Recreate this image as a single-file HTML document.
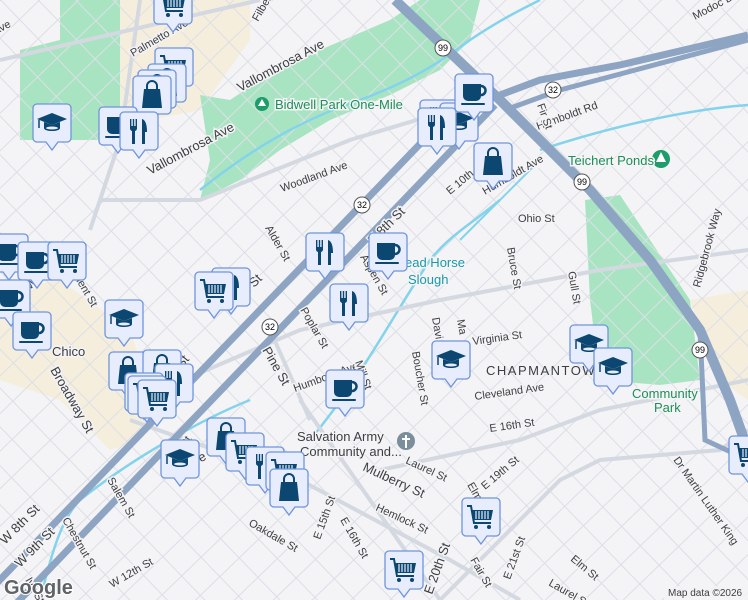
<!DOCTYPE html>
<html><head><meta charset="utf-8"><style>
html,body{margin:0;padding:0;width:748px;height:600px;overflow:hidden;background:#f4f3f5}
svg{display:block}
text{font-family:"Liberation Sans",sans-serif}
.s{font-size:11px;fill:#3c4043;paint-order:stroke;stroke:#f4f3f5;stroke-width:3px}
.m{font-size:13px;fill:#3c4043;paint-order:stroke;stroke:#f4f3f5;stroke-width:3px}
.g{font-size:13px;fill:#1e8e5a;paint-order:stroke;stroke:#f4f3f5;stroke-width:3px}
.w{font-size:13px;fill:#1a9aa8;paint-order:stroke;stroke:#f4f3f5;stroke-width:3px}
</style></head><body>
<svg width="748" height="600" viewBox="0 0 748 600" xmlns="http://www.w3.org/2000/svg">
<defs>
<pattern id="grid" width="27" height="27" patternUnits="userSpaceOnUse" patternTransform="rotate(-44)">
<line x1="0" y1="0" x2="27" y2="0" stroke="#dcdfe7" stroke-width="2"/>
<line x1="0" y1="0" x2="0" y2="27" stroke="#dcdfe7" stroke-width="2"/>
</pattern>
<g id="box"><path d="M4 0H34A4 4 0 0 1 38 4V34A4 4 0 0 1 34 38H25L19 46L13 38H4A4 4 0 0 1 0 34V4A4 4 0 0 1 4 0Z" fill="#e7edfc" stroke="#6f95dc" stroke-width="1.3"/></g>
<g id="cup"><use href="#box"/><path d="M8 10H26V22A5 5 0 0 1 21 27H13A5 5 0 0 1 8 22Z" fill="#0b4770"/><path d="M26 12A4 4 0 0 1 26 21" stroke="#0b4770" stroke-width="2.5" fill="none"/><rect x="6" y="29" width="24" height="2" rx="1" fill="#0b4770"/></g>
<g id="fork"><use href="#box"/><path d="M10 7V16A3 3 0 0 0 12 19V32H15V19A3 3 0 0 0 17 16V7H15.6V14H14.2V7H12.8V14H11.4V7Z" fill="#0b4770"/><path d="M22 32V7C26 8 27 14 27 20H25V32Z" fill="#0b4770"/></g>
<g id="bag"><use href="#box"/><path d="M14 13V10A5 5 0 0 1 24 10V13" stroke="#0b4770" stroke-width="2" fill="none"/><path d="M11 13H27L29 32H9Z" fill="#0b4770"/></g>
<g id="cart"><use href="#box"/><path d="M5 8H9L12 25H29" stroke="#0b4770" stroke-width="2" fill="none"/><path d="M10 12H31L29 22H12Z" fill="#0b4770"/><path d="M14 13V21M17 13V21M20 13V21M23 13V21M26 13V21" stroke="#e7edfc" stroke-width="1.2"/><circle cx="14" cy="29" r="2" fill="#0b4770"/><circle cx="27" cy="29" r="2" fill="#0b4770"/></g>
<g id="grad"><use href="#box"/><path d="M4 15L19 9L34 15L19 21Z" fill="#0b4770"/><path d="M11 18V24C11 28 27 28 27 24V18L19 21Z" fill="#0b4770"/><path d="M6 16V24" stroke="#0b4770" stroke-width="1.5"/><ellipse cx="19" cy="24" rx="6" ry="1.5" fill="#e7edfc"/></g>
</defs>
<rect width="748" height="600" fill="#f4f3f5"/>
<path d="M100 0H250V40L200 110L150 120L120 130L110 80L100 60Z" fill="#f6eedc"/>
<path d="M0 290L60 280L130 330L150 390L140 440L110 450L60 400L0 380Z" fill="#f6eedc"/>
<path d="M690 300L748 290V400L720 380Z" fill="#f6eedc"/>
<path d="M60 0H120V140H20V50L60 40Z" fill="#a9e4c2"/>
<path d="M200 95L230 100L260 80L320 50L390 20L420 0H480L470 40L440 70L390 95L330 120L280 150L240 180L200 200L210 160Z" fill="#a9e4c2"/>
<path d="M585 200L620 195L650 240L690 300L700 380L660 385L600 380L590 300Z" fill="#a9e4c2"/>
<rect width="748" height="600" fill="url(#grid)"/>
<path d="M200 190C250 150 300 120 360 100C400 85 430 70 470 40C500 20 520 10 540 0" stroke="#84d3ec" stroke-width="2.5" fill="none"/>
<path d="M540 150C600 130 680 110 748 105" stroke="#84d3ec" stroke-width="2.5" fill="none"/>
<path d="M460 240C500 200 520 180 540 160" stroke="#84d3ec" stroke-width="2" fill="none"/>
<path d="M310 440C360 380 390 320 430 260C450 235 470 225 500 200" stroke="#84d3ec" stroke-width="2.5" fill="none"/>
<path d="M250 400C200 420 130 460 80 500C60 520 50 560 40 600" stroke="#84d3ec" stroke-width="2.5" fill="none"/>
<g stroke="#d3d8e1" stroke-width="4" fill="none">
<path d="M0 60L260 0"/><path d="M90 230L120 140L140 0"/><path d="M100 200L200 200L350 140L450 110"/>
<path d="M160 390L300 330L440 300L600 270L748 250"/><path d="M380 470L520 440L600 410L748 380"/>
<path d="M130 420L300 480L450 560L520 600"/><path d="M300 400L440 600"/><path d="M440 600L560 480L600 460L720 450L748 430"/>
<path d="M270 330L310 420"/>
</g>
<path d="M-5 585L445 118" stroke="#8da4c2" stroke-width="7" fill="none"/>
<path d="M10 610L495 105" stroke="#8da4c2" stroke-width="7" fill="none"/>
<path d="M395 0L500 100L590 190L650 260L700 330L730 400L748 450" stroke="#8da4c2" stroke-width="10" fill="none"/>
<path d="M748 35L620 65L540 80L500 95" stroke="#8da4c2" stroke-width="7" fill="none"/>
<path d="M748 40L560 90L505 110" stroke="#8da4c2" stroke-width="5" fill="none"/>
<path d="M700 330L705 440L748 460" stroke="#8da4c2" stroke-width="5" fill="none"/>
<g font-size="9" text-anchor="middle">
<circle cx="443" cy="48" r="8" fill="#fff" stroke="#555"/><text x="443" y="51">99</text>
<circle cx="553" cy="90" r="8" fill="#fff" stroke="#555"/><text x="553" y="93">32</text>
<circle cx="582" cy="182" r="8" fill="#fff" stroke="#555"/><text x="582" y="185">99</text>
<circle cx="362" cy="205" r="8" fill="#fff" stroke="#555"/><text x="362" y="208">32</text>
<circle cx="270" cy="327" r="8" fill="#fff" stroke="#555"/><text x="270" y="330">32</text>
<circle cx="700" cy="350" r="8" fill="#fff" stroke="#555"/><text x="700" y="353">99</text>
</g>
<text class="s" transform="translate(-5,35) rotate(-28)">Ave</text>
<text class="s" transform="translate(133,57) rotate(-30)">Palmetto Ave</text>
<text class="s" transform="translate(258,22) rotate(-60)">Filbert Ave</text>
<text class="m" transform="translate(240,92) rotate(-28)">Vallombrosa Ave</text>
<text class="m" transform="translate(150,175) rotate(-28)">Vallombrosa Ave</text>
<circle cx="262" cy="104" r="7" fill="#1e9c6a"/><path d="M262 99L258 106H266Z" fill="#fff"/>
<text class="g" x="275" y="109">Bidwell Park One-Mile</text>
<text class="s" transform="translate(282,192) rotate(-20)">Woodland Ave</text>
<text class="s" transform="translate(265,228) rotate(60)">Alder St</text>
<text class="s" transform="translate(360,257) rotate(60)">Aspen St</text>
<text class="m" transform="translate(230,312) rotate(-45)">E 8th St</text>
<text class="m" transform="translate(373,245) rotate(-45)">E 8th St</text>
<text class="s" transform="translate(450,195) rotate(-40)">E 10th</text>
<text class="s" transform="translate(485,195) rotate(-30)">Humboldt Ave</text>
<text class="s" transform="translate(538,130) rotate(-20)">Humboldt Rd</text>
<text class="s" transform="translate(537,105) rotate(70)">Fir St</text>
<text class="s" x="518" y="222">Ohio St</text>
<text class="s" transform="translate(507,248) rotate(80)">Bruce St</text>
<text class="s" transform="translate(568,272) rotate(80)">Gull St</text>
<text class="s" transform="translate(700,288) rotate(-75)">Ridgebrook Way</text>
<text class="s" transform="translate(695,20) rotate(-28)">Modoc Dr</text>
<circle cx="661" cy="159" r="9" fill="#1e9c6a"/><path d="M661 152L656 162H666Z" fill="#fff"/>
<text class="g" x="568" y="165">Teichert Ponds</text>
<text class="w" x="405" y="267">ead Horse</text>
<text class="w" x="408" y="284">Slough</text>
<text class="s" transform="translate(300,310) rotate(60)">Poplar St</text>
<text class="s" transform="translate(295,392) rotate(-20)">Humboldt Ave</text>
<text class="s" transform="translate(355,362) rotate(70)">Mill St</text>
<text class="m" transform="translate(262,350) rotate(60)">Pine St</text>
<text class="s" transform="translate(432,318) rotate(80)">Davi</text>
<text class="s" transform="translate(457,320) rotate(80)">Ma</text>
<text class="s" transform="translate(412,352) rotate(80)">Boucher St</text>
<text class="s" transform="translate(473,345) rotate(-8)">Virginia St</text>
<text x="486" y="375" font-size="13" fill="#3c4043" letter-spacing="1.5">CHAPMANTOWN</text>
<text class="s" transform="translate(475,400) rotate(-8)">Cleveland Ave</text>
<text class="g" x="632" y="398">Community</text>
<text class="g" x="654" y="412">Park</text>
<text class="s" transform="translate(490,432) rotate(-8)">E 16th St</text>
<circle cx="406" cy="441" r="9" fill="#7b8e9c"/><path d="M406 435V448M402 439H410" stroke="#fff" stroke-width="2"/>
<text class="m" x="297" y="441">Salvation Army</text>
<text class="m" x="300" y="456">Community and...</text>
<text class="s" transform="translate(405,463) rotate(25)">Laurel St</text>
<text class="s" transform="translate(485,490) rotate(-40)">E 19th St</text>
<text class="s" transform="translate(467,485) rotate(60)">Elm</text>
<text class="m" transform="translate(362,470) rotate(25)">Mulberry St</text>
<text class="s" transform="translate(375,510) rotate(25)">Hemlock St</text>
<text class="m" transform="translate(432,595) rotate(-70)">E 20th St</text>
<text class="s" transform="translate(470,560) rotate(60)">Fair St</text>
<text class="s" transform="translate(510,580) rotate(-70)">E 21st St</text>
<text class="s" transform="translate(570,560) rotate(40)">Elm St</text>
<text class="s" transform="translate(548,585) rotate(30)">Laurel St</text>
<text class="s" transform="translate(673,460) rotate(55)">Dr Martin Luther King</text>
<text class="s" transform="translate(340,520) rotate(60)">E 16th St</text>
<text class="s" transform="translate(320,540) rotate(-70)">E 15th St</text>
<text class="s" transform="translate(248,525) rotate(30)">Oakdale St</text>
<text class="s" transform="translate(112,588) rotate(-30)">W 12th St</text>
<text class="s" transform="translate(168,480) rotate(-60)">W 11th St</text>
<text class="s" transform="translate(107,480) rotate(60)">Salem St</text>
<text class="s" transform="translate(62,520) rotate(60)">Chestnut St</text>
<text class="s" transform="translate(25,580) rotate(60)">Ivy St</text>
<text class="m" transform="translate(20,568) rotate(-45)">W 9th St</text>
<text class="m" transform="translate(5,545) rotate(-45)">W 8th St</text>
<text class="m" transform="translate(50,370) rotate(60)">Broadway St</text>
<text class="m" x="52" y="356">Chico</text>
<text class="s" transform="translate(70,270) rotate(60)">Orient St</text>
<text class="s" transform="translate(30,290) rotate(-40)">Wall St</text>
<text class="s" transform="translate(30,330) rotate(-60)">E 5</text>
<text class="m" transform="translate(188,470) rotate(-30)">Ave</text>
<text class="m" transform="translate(160,395) rotate(-50)">E 9th St</text>
<use href="#cart" x="154" y="-14"/>
<use href="#cart" x="155" y="48"/>
<use href="#bag" x="148" y="64"/>
<use href="#bag" x="138" y="70"/>
<use href="#bag" x="133" y="76"/>
<use href="#grad" x="33" y="104"/>
<use href="#cup" x="99" y="107"/>
<use href="#fork" x="120" y="112"/>
<use href="#fork" x="420" y="100"/>
<use href="#grad" x="440" y="103"/>
<use href="#fork" x="418" y="108"/>
<use href="#cup" x="455" y="74"/>
<use href="#bag" x="474" y="143"/>
<use href="#fork" x="306" y="233"/>
<use href="#cup" x="369" y="233"/>
<use href="#fork" x="330" y="284"/>
<use href="#cup" x="-10" y="234"/>
<use href="#cup" x="18" y="242"/>
<use href="#cart" x="48" y="242"/>
<use href="#cup" x="-8" y="280"/>
<use href="#cup" x="13" y="312"/>
<use href="#fork" x="212" y="268"/>
<use href="#cart" x="195" y="272"/>
<use href="#grad" x="105" y="300"/>
<use href="#bag" x="109" y="352"/>
<use href="#bag" x="143" y="350"/>
<use href="#fork" x="155" y="364"/>
<use href="#cart" x="125" y="373"/>
<use href="#cart" x="128" y="376"/>
<use href="#cart" x="138" y="380"/>
<use href="#cup" x="326" y="370"/>
<use href="#grad" x="432" y="341"/>
<use href="#grad" x="570" y="325"/>
<use href="#grad" x="594" y="348"/>
<use href="#bag" x="207" y="418"/>
<use href="#cart" x="226" y="433"/>
<use href="#fork" x="246" y="447"/>
<use href="#cart" x="266" y="452"/>
<use href="#bag" x="270" y="469"/>
<use href="#grad" x="161" y="440"/>
<use href="#cart" x="729" y="436"/>
<use href="#cart" x="462" y="498"/>
<use href="#cart" x="385" y="551"/>
<text x="4" y="594" font-size="20" font-weight="bold" fill="#5f6368" stroke="#fff" stroke-width="2" paint-order="stroke">Google</text>
<rect x="664" y="586" width="84" height="14" fill="#f4f3f5" opacity="0.8"/>
<text x="668" y="596" font-size="10" fill="#3c4043">Map data ©2026</text>
</svg>
</body></html>
